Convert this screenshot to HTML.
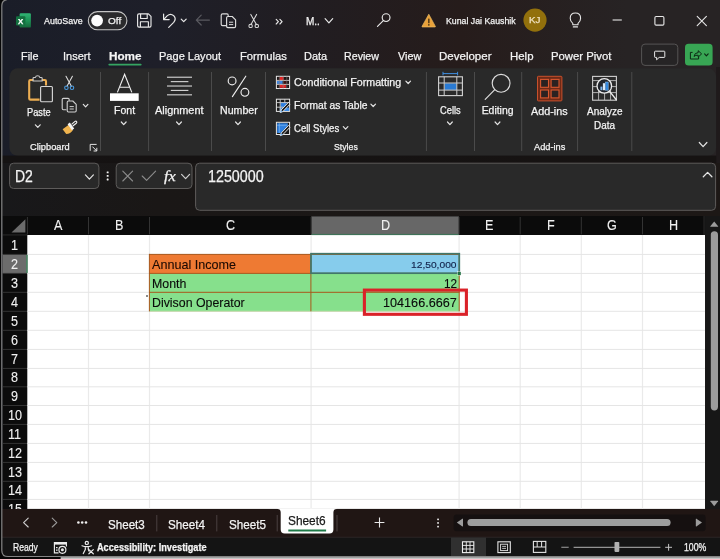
<!DOCTYPE html>
<html lang="en">
<head>
<meta charset="utf-8">
<title>Excel</title>
<style>
*{box-sizing:border-box;margin:0;padding:0}
html,body{width:720px;height:559px;overflow:hidden;background:#1c1a1c}
body{font-family:"Liberation Sans",sans-serif;color:#fff;position:relative;font-size:12px}
#win{position:absolute;left:0;top:0;width:720px;height:559px;overflow:hidden;will-change:transform;
 background:linear-gradient(90deg,#1a1d28 0%,#1e1f29 22%,#211d21 43%,#261c1b 64%,#272324 87%,#272324 100%)}
.a{position:absolute;white-space:nowrap}
.t{position:absolute;white-space:nowrap;line-height:1;color:#f4f4f4;transform-origin:0 0;-webkit-text-stroke:0.25px currentColor}
svg{position:absolute;overflow:visible;left:0;top:0}
</style>
</head>
<body>
<div id="win">
<!-- TITLE BAR -->
<svg width="720" height="559" viewBox="0 0 720 559">
<defs><linearGradient id="xg" x1="0" y1="0" x2="0" y2="1"><stop offset="0" stop-color="#2fb574"/><stop offset="0.5" stop-color="#1e9457"/><stop offset="1" stop-color="#16693c"/></linearGradient></defs>
<rect x="19.6" y="13.3" width="11.3" height="14.3" rx="1.2" fill="url(#xg)"/>
<rect x="16" y="16.2" width="9.4" height="9.2" rx="1" fill="#13703f"/>
<rect x="88.3" y="11.6" width="38.6" height="18.2" rx="9.1" fill="#2a2a2c" stroke="#c4c4c4" stroke-width="1.1"/>
<circle cx="97.1" cy="20.6" r="5.9" fill="#fdfdfd"/>
<g fill="none" stroke="#e8e8e8" stroke-width="1.15" stroke-linejoin="round">
<path d="M137.6 15.2 q0 -1.4 1.4 -1.4 h9.4 l2.6 2.6 v9.4 q0 1.4 -1.4 1.4 h-10.6 q-1.4 0 -1.4 -1.4 z"/>
<path d="M140.6 13.9 v4.6 h6.6 v-4.6"/>
<path d="M140.4 27.1 v-5.4 h8 v5.4"/>
</g>
<path d="M163.6 14 v5.6 h5.6 M163.9 19.3 l3.2 -3.4 q3.4 -3 6.6 -0.2 q3 3.2 0 6.6 l-5 5" fill="none" stroke="#e8e8e8" stroke-width="1.2" stroke-linecap="round" stroke-linejoin="round"/>
<path d="M181.20 19.10 L183.70 21.70 L186.20 19.10" fill="none" stroke="#e8e8e8" stroke-width="1.20" stroke-linecap="round" stroke-linejoin="round"/>
<path d="M209.4 20.1 h-13 M201.2 15.2 l-4.9 4.9 l4.9 4.9" fill="none" stroke="#5a5a60" stroke-width="1.2" stroke-linecap="round" stroke-linejoin="round"/>
<g fill="none" stroke="#dcdcdc" stroke-width="1.15" stroke-linejoin="round">
<path d="M226 25.6 h-3.4 q-1.4 0 -1.4 -1.4 v-9 q0 -1.4 1.4 -1.4 h4.4 q1.2 0 1.2 1.4 v1.2"/>
<path d="M226.6 17.8 q0 -1.3 1.3 -1.3 h4.3 l3.4 3.4 v6.4 q0 1.3 -1.3 1.3 h-6.4 q-1.3 0 -1.3 -1.3 z"/>
<path d="M229 22.2 h4.2 M229 24.6 h4.2" stroke-width="1"/>
</g>
<g fill="none" stroke="#dcdcdc" stroke-width="1.05" stroke-linecap="round">
<path d="M250.8 14.4 l5.6 10.2 M256.6 14.4 l-5.6 10.2"/>
<circle cx="250.6" cy="25.9" r="1.7"/><circle cx="256.8" cy="25.9" r="1.7"/>
</g>
<path d="M276.2 19.4 l2.2 2.3 l-2.2 2.3 M279.9 19.4 l2.2 2.3 l-2.2 2.3" fill="none" stroke="#e8e8e8" stroke-width="1.15" stroke-linecap="round" stroke-linejoin="round"/>
<path d="M325.10 18.60 L328.90 22.80 L332.70 18.60" fill="none" stroke="#e8e8e8" stroke-width="1.20" stroke-linecap="round" stroke-linejoin="round"/>
<circle cx="386.1" cy="17.6" r="3.9" fill="none" stroke="#e8e8e8" stroke-width="1.15"/>
<path d="M383.3 20.6 l-5.8 5.8" fill="none" stroke="#e8e8e8" stroke-width="1.2" stroke-linecap="round"/>
<path d="M428.8 14.2 l6.6 12.2 q0.2 0.6 -0.5 0.6 h-12.4 q-0.7 0 -0.5 -0.6 z" fill="#e9a23b" stroke="#f3c46a" stroke-width="0.6" stroke-linejoin="round"/>
<rect x="428.2" y="18.4" width="1.3" height="4.8" rx="0.5" fill="#3a2a12"/>
<circle cx="428.85" cy="24.9" r="0.8" fill="#3a2a12"/>
<circle cx="535" cy="20.1" r="11.6" fill="#92700c"/>
<g fill="none" stroke="#e8e8e8" stroke-width="1.1" stroke-linecap="round" stroke-linejoin="round">
<path d="M572.8 23.4 q-2.6 -2.2 -2.6 -5.2 q0 -5.2 5.2 -5.2 q5.2 0 5.2 5.2 q0 3 -2.6 5.2 v1.4 h-5.2 z"/>
<path d="M573.3 26.9 h4.2"/>
</g>
<path d="M612.6 20 h9.2" stroke="#e8e8e8" stroke-width="1.1" fill="none"/>
<rect x="654.9" y="16.5" width="9" height="8.6" rx="1.2" fill="none" stroke="#e8e8e8" stroke-width="1.1"/>
<path d="M697.2 16.4 l9.2 9.2 M706.4 16.4 l-9.2 9.2" stroke="#e8e8e8" stroke-width="1.1" fill="none" stroke-linecap="round"/>
<rect x="108.4" y="63.8" width="33.2" height="1.7" rx="0.8" fill="#35a562"/>
<rect x="641.6" y="44.1" width="36.2" height="21.3" rx="3.4" fill="#262425" stroke="#565454" stroke-width="1"/>
<path d="M655.2 51.2 h9 q0.6 0 0.6 0.6 v5 q0 0.6 -0.6 0.6 h-5 l-2.6 2.4 v-2.4 h-1.4 q-0.6 0 -0.6 -0.6 v-5 q0 -0.6 0.6 -0.6 z" fill="none" stroke="#e8e8e8" stroke-width="1" stroke-linejoin="round"/>
<rect x="685" y="43.8" width="27.6" height="21.8" rx="3.6" fill="#38a654"/>
<path d="M692.6 52.4 h-2.2 v6.6 h8.2 v-2.2 M694 56.4 q0.4 -3.6 4.2 -3.8 v-1.9 l3.4 3.2 l-3.4 3.2 v-1.9 q-2.6 -0.2 -4.2 1.2 z" fill="none" stroke="#0c2814" stroke-width="1" stroke-linejoin="round"/>
<path d="M704.60 53.80 L706.40 55.80 L708.20 53.80" fill="none" stroke="#0c2814" stroke-width="1.10" stroke-linecap="round" stroke-linejoin="round"/>
</svg>
<span class="t" style="left:18.10px;top:18px;font-size:7.60px;transform:scaleX(1.0258);color:#fff;font-weight:bold;">X</span>
<span class="t" style="left:44.40px;top:17px;font-size:9.30px;transform:scaleX(0.9572);">AutoSave</span>
<span class="t" style="left:107.80px;top:17px;font-size:9.30px;transform:scaleX(1.0769);">Off</span>
<span class="t" style="left:305.50px;top:17px;font-size:10.40px;transform:scaleX(0.9622);">M..</span>
<span class="t" style="left:445.80px;top:17px;font-size:9.30px;transform:scaleX(0.9426);">Kunal Jai Kaushik</span>
<span class="t" style="left:529.20px;top:16px;font-size:8.60px;transform:scaleX(1.1359);color:#f0e2c0;">KJ</span>
<span class="t" style="left:21.30px;top:51px;font-size:11.80px;transform:scaleX(0.9206);">File</span>
<span class="t" style="left:62.50px;top:51px;font-size:11.80px;transform:scaleX(0.9318);">Insert</span>
<span class="t" style="left:158.50px;top:51px;font-size:11.80px;transform:scaleX(0.9356);">Page Layout</span>
<span class="t" style="left:239.50px;top:51px;font-size:11.80px;transform:scaleX(0.9516);">Formulas</span>
<span class="t" style="left:303.80px;top:51px;font-size:11.80px;transform:scaleX(0.9305);">Data</span>
<span class="t" style="left:343.80px;top:51px;font-size:11.80px;transform:scaleX(0.9037);">Review</span>
<span class="t" style="left:397.50px;top:51px;font-size:11.80px;transform:scaleX(0.9176);">View</span>
<span class="t" style="left:438.80px;top:51px;font-size:11.80px;transform:scaleX(0.9761);">Developer</span>
<span class="t" style="left:509.50px;top:51px;font-size:11.80px;transform:scaleX(0.9682);">Help</span>
<span class="t" style="left:551.30px;top:51px;font-size:11.80px;transform:scaleX(0.9610);">Power Pivot</span>
<span class="t" style="left:108.80px;top:51px;font-size:11.80px;transform:scaleX(0.9914);font-weight:bold;">Home</span>
<!-- RIBBON -->
<svg width="720" height="559" viewBox="0 0 720 559">
<rect x="9.4" y="68.2" width="706.8" height="87.8" rx="8.5" fill="#292929"/>
<rect x="100.0" y="72" width="1" height="79" fill="#4b4b4b"/>
<rect x="148.1" y="72" width="1" height="79" fill="#4b4b4b"/>
<rect x="211.0" y="72" width="1" height="79" fill="#4b4b4b"/>
<rect x="265.0" y="72" width="1" height="79" fill="#4b4b4b"/>
<rect x="425.9" y="72" width="1" height="79" fill="#4b4b4b"/>
<rect x="474.0" y="72" width="1" height="79" fill="#4b4b4b"/>
<rect x="521.2" y="72" width="1" height="79" fill="#4b4b4b"/>
<rect x="577.1" y="72" width="1" height="79" fill="#4b4b4b"/>
<rect x="631.3" y="72" width="1" height="79" fill="#4b4b4b"/>
<path d="M33.4 80 h-3 q-1.2 0 -1.2 1.2 v17.2 q0 1.2 1.2 1.2 h9.2 M41.8 80 h3 q1.2 0 1.2 1.2 v4.4" fill="none" stroke="#edae52" stroke-width="2.1" stroke-linejoin="round"/>
<path d="M33 81 v-2.6 q0 -0.9 0.9 -0.9 h1.5 q0.3 -1.8 2.2 -1.8 q1.9 0 2.2 1.8 h1.5 q0.9 0 0.9 0.9 v2.6 z" fill="none" stroke="#c9c9c9" stroke-width="1.1" stroke-linejoin="round"/>
<rect x="40.6" y="86.5" width="11.8" height="15.2" rx="1" fill="#2b2b2b" stroke="#d6d6d6" stroke-width="1.15"/>
<path d="M35.40 124.80 L37.80 127.40 L40.20 124.80" fill="none" stroke="#e4e4e4" stroke-width="1.20" stroke-linecap="round" stroke-linejoin="round"/>
<path d="M66 76.2 l5.4 10 M72.4 76.2 l-5.4 10" fill="none" stroke="#e0e0e0" stroke-width="1.05" stroke-linecap="round"/>
<circle cx="66.4" cy="87.8" r="1.75" fill="none" stroke="#4a9be0" stroke-width="1.1"/><circle cx="72" cy="87.8" r="1.75" fill="none" stroke="#4a9be0" stroke-width="1.1"/>
<g fill="none" stroke="#d2d2d2" stroke-width="1.1" stroke-linejoin="round">
<path d="M66.4 109.8 h-3 q-1.2 0 -1.2 -1.2 v-9 q0 -1.2 1.2 -1.2 h4.6 q1.2 0 1.2 1.2 v1.2"/>
<path d="M67.2 102.2 q0 -1.2 1.2 -1.2 h4.4 l3.4 3.4 v6.4 q0 1.2 -1.2 1.2 h-6.6 q-1.2 0 -1.2 -1.2 z"/>
<path d="M69.6 106.6 h4.2 M69.6 109 h4.2" stroke-width="1"/>
</g>
<path d="M83.30 104.40 L85.60 106.80 L87.90 104.40" fill="none" stroke="#e4e4e4" stroke-width="1.20" stroke-linecap="round" stroke-linejoin="round"/>
<path d="M62.6 129.2 l6.2 -4.4 l4 5.4 q-2.2 3.6 -6.6 3.8 z" fill="#f0b44e"/>
<path d="M67.6 124.2 l2.2 -1.6 l4.4 6 l-2.2 1.6 z" fill="#f4f4f4"/>
<path d="M71.6 124.4 l3.4 -3 q1 -0.6 1.6 0.2 q0.6 0.9 -0.3 1.6 l-3.5 2.8" fill="none" stroke="#f0f0f0" stroke-width="1.1" stroke-linejoin="round"/>
<path d="M96.6 144.4 h-6.4 v6.4 M92.4 146.6 l4.4 4.4 M93.6 151 h3.2 v-3.2" fill="none" stroke="#e4e4e4" stroke-width="1" />
<path d="M117.4 92.4 l7.2 -18 l7.2 18 M120 87.2 h9.2" fill="none" stroke="#f0f0f0" stroke-width="1.15" stroke-linejoin="miter"/>
<rect x="110" y="93.3" width="28.7" height="7.6" fill="#ffffff"/>
<path d="M121.30 122.00 L123.70 124.60 L126.10 122.00" fill="none" stroke="#e4e4e4" stroke-width="1.20" stroke-linecap="round" stroke-linejoin="round"/>
<rect x="167" y="76.65" width="25" height="1.15" fill="#cfcfcf"/>
<rect x="170.8" y="81.05" width="17.6" height="1.15" fill="#cfcfcf"/>
<rect x="167" y="85.45" width="25" height="1.15" fill="#cfcfcf"/>
<rect x="170.8" y="89.85" width="17.6" height="1.15" fill="#cfcfcf"/>
<rect x="167" y="94.25" width="25" height="1.15" fill="#cfcfcf"/>
<path d="M176.60 122.00 L179.00 124.60 L181.40 122.00" fill="none" stroke="#e4e4e4" stroke-width="1.20" stroke-linecap="round" stroke-linejoin="round"/>
<g fill="none" stroke="#ececec" stroke-width="1.15">
<circle cx="232.1" cy="80.9" r="3.9"/><circle cx="244.9" cy="92.3" r="3.9"/><path d="M245.8 76.2 l-13.4 20.4" stroke-linecap="round"/>
</g>
<path d="M235.60 122.00 L238.00 124.60 L240.40 122.00" fill="none" stroke="#e4e4e4" stroke-width="1.20" stroke-linecap="round" stroke-linejoin="round"/>
<rect x="276.4" y="76.3" width="13.2" height="12.2" fill="#1d1717" stroke="#e6e6e6" stroke-width="1"/>
<rect x="279.7" y="77.0" width="3.9" height="3" fill="#e32626"/>
<rect x="279.7" y="84.8" width="6.2" height="3" fill="#e32626"/>
<rect x="277" y="80.9" width="5.6" height="3" fill="#3d86e0"/>
<rect x="283.4" y="80.9" width="3.2" height="3" fill="#3a1414"/>
<path d="M276.4 80.4 h13.2 M276.4 84.4 h13.2" fill="none" stroke="#d8d0d0" stroke-width="0.9"/>
<path d="M279.3 76.3 v12.2 M283.2 76.3 v12.2 M286.8 76.3 v12.2" fill="none" stroke="#8c7c7c" stroke-width="0.6"/>
<rect x="276.4" y="99.2" width="13.2" height="12.2" fill="#1a1a1a" stroke="#e6e6e6" stroke-width="1"/>
<rect x="280.6" y="102.6" width="6" height="4.6" fill="#2f80e0"/>
<rect x="279.8" y="107.6" width="9.4" height="3.4" fill="#3f8ee6"/>
<path d="M276.4 102.6 h13.2 M276.4 107.2 h6.6 M280.2 99.2 v12.2 M284.8 99.2 v3.4" fill="none" stroke="#d4d4d4" stroke-width="0.9"/>
<path d="M288.40 102.40 l1.7 1.6 l-7.3 7.6 l-2.6 1 l0.9 -2.6 z" fill="#202020" stroke="#f2f2f2" stroke-width="0.9" stroke-linejoin="round"/><path d="M282.80 111.60 l-2.6 1 l0.9 -2.6 z" fill="#7ab8f2"/>
<rect x="276.4" y="122.3" width="13.2" height="12.2" fill="#1a1a1a" stroke="#e6e6e6" stroke-width="1"/>
<path d="M277.2 123.3 h10.6 v2.4 l-7 7.4 h-3.6 z" fill="#2f80e0"/>
<path d="M279.4 123.3 v9.6 M277.2 125.3 h10" fill="none" stroke="#7ab4ee" stroke-width="0.7"/>
<path d="M288.40 125.50 l1.7 1.6 l-7.3 7.6 l-2.6 1 l0.9 -2.6 z" fill="#202020" stroke="#f2f2f2" stroke-width="0.9" stroke-linejoin="round"/><path d="M282.80 134.70 l-2.6 1 l0.9 -2.6 z" fill="#7ab8f2"/>
<path d="M405.90 81.10 L408.20 83.50 L410.50 81.10" fill="none" stroke="#e4e4e4" stroke-width="1.20" stroke-linecap="round" stroke-linejoin="round"/>
<path d="M370.90 104.10 L373.20 106.50 L375.50 104.10" fill="none" stroke="#e4e4e4" stroke-width="1.20" stroke-linecap="round" stroke-linejoin="round"/>
<path d="M343.30 126.70 L345.60 129.10 L347.90 126.70" fill="none" stroke="#e4e4e4" stroke-width="1.20" stroke-linecap="round" stroke-linejoin="round"/>
<path d="M443 71.8 v3.6 M457.6 71.8 v3.6 M443 73.6 h14.6" fill="none" stroke="#3f8fe0" stroke-width="1"/>
<rect x="438.6" y="76.8" width="23.8" height="18.8" fill="#2a2a2a" stroke="#d4d4d4" stroke-width="1.1"/>
<rect x="444.6" y="83.3" width="12" height="6.6" fill="#2a7bd4"/>
<path d="M444.2 76.8 v18.8 M456.8 76.8 v18.8 M438.6 83 h23.8 M438.6 90.1 h23.8" fill="none" stroke="#cfcfcf" stroke-width="1"/>
<path d="M447.50 122.00 L449.90 124.60 L452.30 122.00" fill="none" stroke="#e4e4e4" stroke-width="1.20" stroke-linecap="round" stroke-linejoin="round"/>
<circle cx="501.1" cy="83.3" r="8.9" fill="none" stroke="#dcdcdc" stroke-width="1.15"/>
<path d="M494.8 89.7 l-9.6 9.6" fill="none" stroke="#dcdcdc" stroke-width="1.2" stroke-linecap="round"/>
<path d="M495.10 122.00 L497.50 124.60 L499.90 122.00" fill="none" stroke="#e4e4e4" stroke-width="1.20" stroke-linecap="round" stroke-linejoin="round"/>
<rect x="537.5" y="76.3" width="24.4" height="24.6" rx="0.8" fill="#6e2a17" stroke="#c9502c" stroke-width="1"/>
<rect x="540.6" y="79.4" width="7.9" height="7.9" fill="#2b2221" stroke="#d9582f" stroke-width="1.1"/>
<rect x="551.1" y="79.4" width="7.9" height="7.9" fill="#2b2221" stroke="#d9582f" stroke-width="1.1"/>
<rect x="540.6" y="90.0" width="7.9" height="7.9" fill="#2b2221" stroke="#d9582f" stroke-width="1.1"/>
<rect x="551.1" y="90.0" width="7.9" height="7.9" fill="#2b2221" stroke="#d9582f" stroke-width="1.1"/>
<rect x="592.6" y="76.4" width="23.8" height="23.8" fill="#2a2a2a" stroke="#cfcfcf" stroke-width="1.1"/>
<path d="M592.6 80.6 h23.8 M592.6 86.6 h23.8 M592.6 92.6 h23.8 M598.6 80.6 v19.6 M604.6 80.6 v19.6 M610.6 80.6 v19.6" fill="none" stroke="#bdbdbd" stroke-width="0.9"/>
<circle cx="604.3" cy="85.9" r="7.3" fill="#20242b" stroke="#ececec" stroke-width="1.3"/>
<rect x="600.4" y="86.6" width="2" height="3.6" fill="#7fb6ee"/><rect x="602.9" y="83.2" width="2.2" height="7" fill="#d8e8f8"/><rect x="605.6" y="82" width="2.6" height="8.2" fill="#2f86e0" stroke="#9ccaf4" stroke-width="0.5"/>
<path d="M609.8 91.6 l6.4 8" fill="none" stroke="#ececec" stroke-width="1.5" stroke-linecap="round"/>
<path d="M699.30 142.50 L703.10 146.70 L706.90 142.50" fill="none" stroke="#e4e4e4" stroke-width="1.20" stroke-linecap="round" stroke-linejoin="round"/>
</svg>
<span class="t" style="left:26.60px;top:108px;font-size:10.40px;transform:scaleX(0.8912);">Paste</span>
<span class="t" style="left:29.60px;top:142px;font-size:9.80px;transform:scaleX(0.9465);">Clipboard</span>
<span class="t" style="left:114.10px;top:106px;font-size:10.40px;transform:scaleX(1.0139);">Font</span>
<span class="t" style="left:155.40px;top:106px;font-size:10.40px;transform:scaleX(1.0508);">Alignment</span>
<span class="t" style="left:219.60px;top:106px;font-size:10.40px;transform:scaleX(1.0218);">Number</span>
<span class="t" style="left:294.00px;top:78px;font-size:10.40px;transform:scaleX(1.0255);">Conditional Formatting</span>
<span class="t" style="left:294.00px;top:101px;font-size:10.40px;transform:scaleX(0.9896);">Format as Table</span>
<span class="t" style="left:294.00px;top:124px;font-size:10.40px;transform:scaleX(0.9200);">Cell Styles</span>
<span class="t" style="left:333.80px;top:142px;font-size:9.80px;transform:scaleX(0.8919);">Styles</span>
<span class="t" style="left:440.00px;top:106px;font-size:10.40px;transform:scaleX(0.8954);">Cells</span>
<span class="t" style="left:481.70px;top:106px;font-size:10.40px;">Editing</span>
<span class="t" style="left:531.20px;top:107px;font-size:10.40px;transform:scaleX(1.0378);">Add-ins</span>
<span class="t" style="left:533.70px;top:142px;font-size:9.80px;transform:scaleX(0.9419);">Add-ins</span>
<span class="t" style="left:586.70px;top:107px;font-size:10.40px;transform:scaleX(0.9621);">Analyze</span>
<span class="t" style="left:593.90px;top:121px;font-size:10.40px;transform:scaleX(0.9556);">Data</span>
<!-- FORMULA BAR -->
<svg width="720" height="559" viewBox="0 0 720 559">
<defs><linearGradient id="fbg" x1="0" y1="0" x2="1" y2="0"><stop offset="0" stop-color="#18181a"/><stop offset="0.22" stop-color="#1a1716"/><stop offset="1" stop-color="#1d1816"/></linearGradient></defs>
<rect x="0" y="156" width="720" height="60.4" fill="url(#fbg)"/>
<rect x="0" y="155.5" width="720" height="7.4" fill="#141112" opacity="0.75"/>
<rect x="716.2" y="67" width="3.8" height="96" fill="#1f1a1b"/>
<rect x="9.6" y="163.2" width="89.3" height="25.3" rx="4" fill="#292929" stroke="#5e5c5b" stroke-width="1"/>
<rect x="116.2" y="163.2" width="75.8" height="25.3" rx="4" fill="#292929" stroke="#5e5c5b" stroke-width="1"/>
<rect x="195.6" y="163.2" width="520.0" height="47.1" rx="4" fill="#292929" stroke="#5e5c5b" stroke-width="1"/>
<path d="M85.40 174.90 L89.40 179.10 L93.40 174.90" fill="none" stroke="#e4e4e4" stroke-width="1.20" stroke-linecap="round" stroke-linejoin="round"/>
<rect x="106.7" y="171.4" width="1.9" height="1.9" rx="0.4" fill="#f4f4f4"/>
<rect x="106.7" y="174.9" width="1.9" height="1.9" rx="0.4" fill="#f4f4f4"/>
<rect x="106.7" y="178.5" width="1.9" height="1.9" rx="0.4" fill="#f4f4f4"/>
<path d="M122.8 171.2 l9.8 9.8 M132.6 171.2 l-9.8 9.8" fill="none" stroke="#8c8c8c" stroke-width="1.1" stroke-linecap="round"/>
<path d="M142.2 176 l4.4 4.4 l9 -9.2" fill="none" stroke="#8c8c8c" stroke-width="1.1" stroke-linecap="round" stroke-linejoin="round"/>
<path d="M181.60 174.40 L185.60 178.60 L189.60 174.40" fill="none" stroke="#d0d0d0" stroke-width="1.20" stroke-linecap="round" stroke-linejoin="round"/>
<path d="M703.30 176.80 L707.60 172.40 L711.90 176.80" fill="none" stroke="#e4e4e4" stroke-width="1.30" stroke-linecap="round" stroke-linejoin="round"/>
</svg>
<span class="t" style="left:14.50px;top:169px;font-size:16.80px;transform:scaleX(0.8337);">D2</span>
<span class="t" style="left:164.40px;top:169px;font-size:14.50px;transform:scaleX(1.1271);font-style:italic;font-family:'Liberation Serif',serif;">fx</span>
<span class="t" style="left:207.60px;top:169px;font-size:16.00px;transform:scaleX(0.8942);">1250000</span>
<!-- GRID -->
<svg id="gridsvg" width="720" height="559" viewBox="0 0 720 559">
<rect x="2.4" y="216" width="701" height="292.9" fill="#0b0b0b"/>
<rect x="27.3" y="235.0" width="677.8" height="273.9" fill="#ffffff"/>
<rect x="311.3" y="216.4" width="147.6" height="18.3" fill="#676767"/>
<rect x="311.3" y="233.9" width="147.6" height="1.2" fill="#3f7258"/>
<rect x="2.6" y="254.10" width="24.6" height="19.20" fill="#6c6c6c"/>
<rect x="26.3" y="254.10" width="1.3" height="19.20" fill="#418a60"/>
<polygon points="11.5,232.6 25.4,232.6 25.4,219.2" fill="#6b6b6b"/>
<rect x="2.6" y="234.5" width="24.6" height="0.9" fill="#2e2e2e"/>
<rect x="26.9" y="217" width="1" height="17.4" fill="#333333"/>
<rect x="88.0" y="217" width="1" height="17.4" fill="#333333"/>
<rect x="87.90" y="235.0" width="1.2" height="273.9" fill="#eaeaea"/>
<rect x="149.0" y="217" width="1" height="17.4" fill="#333333"/>
<rect x="148.90" y="235.0" width="1.2" height="273.9" fill="#eaeaea"/>
<rect x="310.6" y="217" width="1" height="17.4" fill="#333333"/>
<rect x="310.50" y="235.0" width="1.2" height="273.9" fill="#eaeaea"/>
<rect x="458.6" y="217" width="1" height="17.4" fill="#333333"/>
<rect x="458.50" y="235.0" width="1.2" height="273.9" fill="#eaeaea"/>
<rect x="519.7" y="217" width="1" height="17.4" fill="#333333"/>
<rect x="519.60" y="235.0" width="1.2" height="273.9" fill="#eaeaea"/>
<rect x="580.8" y="217" width="1" height="17.4" fill="#333333"/>
<rect x="580.70" y="235.0" width="1.2" height="273.9" fill="#eaeaea"/>
<rect x="642.0" y="217" width="1" height="17.4" fill="#333333"/>
<rect x="641.90" y="235.0" width="1.2" height="273.9" fill="#eaeaea"/>
<rect x="27.4" y="253.90" width="677.7" height="1" fill="#e5e5e5"/>
<rect x="3" y="253.90" width="24" height="1" fill="#333333"/>
<rect x="27.4" y="272.90" width="677.7" height="1" fill="#e5e5e5"/>
<rect x="3" y="272.90" width="24" height="1" fill="#333333"/>
<rect x="27.4" y="291.80" width="677.7" height="1" fill="#e5e5e5"/>
<rect x="3" y="291.80" width="24" height="1" fill="#333333"/>
<rect x="27.4" y="310.80" width="677.7" height="1" fill="#e5e5e5"/>
<rect x="3" y="310.80" width="24" height="1" fill="#333333"/>
<rect x="27.4" y="329.80" width="677.7" height="1" fill="#e5e5e5"/>
<rect x="3" y="329.80" width="24" height="1" fill="#333333"/>
<rect x="27.4" y="348.90" width="677.7" height="1" fill="#e5e5e5"/>
<rect x="3" y="348.90" width="24" height="1" fill="#333333"/>
<rect x="27.4" y="367.90" width="677.7" height="1" fill="#e5e5e5"/>
<rect x="3" y="367.90" width="24" height="1" fill="#333333"/>
<rect x="27.4" y="386.30" width="677.7" height="1" fill="#e5e5e5"/>
<rect x="3" y="386.30" width="24" height="1" fill="#333333"/>
<rect x="27.4" y="405.00" width="677.7" height="1" fill="#e5e5e5"/>
<rect x="3" y="405.00" width="24" height="1" fill="#333333"/>
<rect x="27.4" y="423.90" width="677.7" height="1" fill="#e5e5e5"/>
<rect x="3" y="423.90" width="24" height="1" fill="#333333"/>
<rect x="27.4" y="442.90" width="677.7" height="1" fill="#e5e5e5"/>
<rect x="3" y="442.90" width="24" height="1" fill="#333333"/>
<rect x="27.4" y="461.90" width="677.7" height="1" fill="#e5e5e5"/>
<rect x="3" y="461.90" width="24" height="1" fill="#333333"/>
<rect x="27.4" y="480.80" width="677.7" height="1" fill="#e5e5e5"/>
<rect x="3" y="480.80" width="24" height="1" fill="#333333"/>
<rect x="27.4" y="498.90" width="677.7" height="1" fill="#e5e5e5"/>
<rect x="3" y="498.90" width="24" height="1" fill="#333333"/>
<rect x="149.4" y="254.40" width="161.5" height="19.00" fill="#ee7a33"/>
<rect x="310.9" y="254.40" width="148.4" height="19.00" fill="#86ccec"/>
<rect x="149.4" y="273.40" width="309.9" height="37.90" fill="#86e08c"/>
<rect x="149" y="253.90" width="310.6" height="1" fill="#a9581c"/>
<rect x="149" y="272.90" width="310.6" height="1" fill="#a9581c"/>
<rect x="149" y="291.80" width="310.6" height="1" fill="#a9581c"/>
<rect x="149" y="310.80" width="310.6" height="1" fill="#c9d9b0"/>
<rect x="148.9" y="253.90" width="1" height="57.40" fill="#a9581c"/>
<rect x="310.4" y="253.90" width="1" height="57.40" fill="#a9581c"/>
<rect x="458.7" y="253.90" width="1" height="57.40" fill="#a9581c"/>
<rect x="311" y="253.70" width="148.3" height="19.50" fill="none" stroke="#41776a" stroke-width="1.7"/>
<rect x="457.6" y="271.80" width="3.4" height="3.4" fill="#1f6f3f" stroke="#fff" stroke-width="0.4"/>
<rect x="146.3" y="295.3" width="1.4" height="1.4" fill="#111"/>
<rect x="364.4" y="290.1" width="102" height="24.2" fill="none" stroke="#da2229" stroke-width="3.1"/>
</svg>
<span class="t" style="left:53.75px;top:218px;font-size:14.00px;transform:scaleX(0.9000);color:#f0f0f0;-webkit-text-stroke:0.1px currentColor;">A</span>
<span class="t" style="left:114.80px;top:218px;font-size:14.00px;transform:scaleX(0.9000);color:#f0f0f0;-webkit-text-stroke:0.1px currentColor;">B</span>
<span class="t" style="left:225.75px;top:218px;font-size:14.00px;transform:scaleX(0.9000);color:#f0f0f0;-webkit-text-stroke:0.1px currentColor;">C</span>
<span class="t" style="left:380.55px;top:218px;font-size:14.00px;transform:scaleX(0.9000);color:#f0f0f0;-webkit-text-stroke:0.1px currentColor;">D</span>
<span class="t" style="left:485.45px;top:218px;font-size:14.00px;transform:scaleX(0.9000);color:#f0f0f0;-webkit-text-stroke:0.1px currentColor;">E</span>
<span class="t" style="left:546.90px;top:218px;font-size:14.00px;transform:scaleX(0.9000);color:#f0f0f0;-webkit-text-stroke:0.1px currentColor;">F</span>
<span class="t" style="left:607.00px;top:218px;font-size:14.00px;transform:scaleX(0.9000);color:#f0f0f0;-webkit-text-stroke:0.1px currentColor;">G</span>
<span class="t" style="left:669.25px;top:218px;font-size:14.00px;transform:scaleX(0.9000);color:#f0f0f0;-webkit-text-stroke:0.1px currentColor;">H</span>
<span class="t" style="left:11.40px;top:238px;font-size:14.00px;transform:scaleX(0.9000);color:#f0f0f0;-webkit-text-stroke:0.1px currentColor;">1</span>
<span class="t" style="left:11.40px;top:257px;font-size:14.00px;transform:scaleX(0.9000);color:#f0f0f0;-webkit-text-stroke:0.1px currentColor;">2</span>
<span class="t" style="left:11.40px;top:276px;font-size:14.00px;transform:scaleX(0.9000);color:#f0f0f0;-webkit-text-stroke:0.1px currentColor;">3</span>
<span class="t" style="left:11.40px;top:295px;font-size:14.00px;transform:scaleX(0.9000);color:#f0f0f0;-webkit-text-stroke:0.1px currentColor;">4</span>
<span class="t" style="left:11.40px;top:314px;font-size:14.00px;transform:scaleX(0.9000);color:#f0f0f0;-webkit-text-stroke:0.1px currentColor;">5</span>
<span class="t" style="left:11.40px;top:333px;font-size:14.00px;transform:scaleX(0.9000);color:#f0f0f0;-webkit-text-stroke:0.1px currentColor;">6</span>
<span class="t" style="left:11.40px;top:352px;font-size:14.00px;transform:scaleX(0.9000);color:#f0f0f0;-webkit-text-stroke:0.1px currentColor;">7</span>
<span class="t" style="left:11.40px;top:370px;font-size:14.00px;transform:scaleX(0.9000);color:#f0f0f0;-webkit-text-stroke:0.1px currentColor;">8</span>
<span class="t" style="left:11.40px;top:389px;font-size:14.00px;transform:scaleX(0.9000);color:#f0f0f0;-webkit-text-stroke:0.1px currentColor;">9</span>
<span class="t" style="left:7.89px;top:408px;font-size:14.00px;transform:scaleX(0.9000);color:#f0f0f0;-webkit-text-stroke:0.1px currentColor;">10</span>
<span class="t" style="left:8.36px;top:427px;font-size:14.00px;transform:scaleX(0.9000);color:#f0f0f0;-webkit-text-stroke:0.1px currentColor;">11</span>
<span class="t" style="left:7.89px;top:446px;font-size:14.00px;transform:scaleX(0.9000);color:#f0f0f0;-webkit-text-stroke:0.1px currentColor;">12</span>
<span class="t" style="left:7.89px;top:465px;font-size:14.00px;transform:scaleX(0.9000);color:#f0f0f0;-webkit-text-stroke:0.1px currentColor;">13</span>
<span class="t" style="left:7.89px;top:483px;font-size:14.00px;transform:scaleX(0.9000);color:#f0f0f0;-webkit-text-stroke:0.1px currentColor;">14</span>
<div class="a" style="left:2px;top:500px;width:26px;height:8.9px;overflow:hidden"><div class="a" style="left:0;top:-500px"><span class="t" style="left:5.89px;top:502px;font-size:14.00px;transform:scaleX(0.9000);color:#f0f0f0;-webkit-text-stroke:0.1px currentColor;">15</span></div></div>
<span class="t" style="left:152.20px;top:258px;font-size:13.20px;transform:scaleX(0.9539);color:#1c0a02;-webkit-text-stroke:0.12px currentColor;">Annual Income</span>
<span class="t" style="left:152.20px;top:277px;font-size:13.20px;transform:scaleX(0.9378);color:#0a0a0a;-webkit-text-stroke:0.12px currentColor;">Month</span>
<span class="t" style="left:152.20px;top:296px;font-size:13.20px;transform:scaleX(0.9370);color:#0a0a0a;-webkit-text-stroke:0.12px currentColor;">Divison Operator</span>
<span class="t" style="left:411.00px;top:260px;font-size:9.70px;transform:scaleX(1.0566);color:#13244c;-webkit-text-stroke:0.15px currentColor;">12,50,000</span>
<span class="t" style="left:444.00px;top:278px;font-size:12.30px;transform:scaleX(0.9578);color:#0a0a0a;-webkit-text-stroke:0.12px currentColor;">12</span>
<span class="t" style="left:383.20px;top:296px;font-size:13.30px;transform:scaleX(0.9503);color:#0a0a0a;-webkit-text-stroke:0.12px currentColor;">104166.6667</span>
<!-- SHEET TABS / STATUS / SCROLLBARS -->
<svg width="720" height="559" viewBox="0 0 720 559">
<rect x="705.1" y="216" width="14.9" height="293.2" fill="#171717"/>
<rect x="703.4" y="216" width="1.7" height="19" fill="#1c1c1c"/>
<path d="M714.2 221.6 l3.9 4.7 q0.3 0.5 -0.3 0.5 h-7.2 q-0.6 0 -0.3 -0.5 z" fill="#9c9c9c"/>
<rect x="710.8" y="231.2" width="7.2" height="179.2" rx="3.6" fill="#9c9c9c"/>
<path d="M714.2 506.2 l3.9 -4.9 q0.3 -0.5 -0.3 -0.5 h-7.2 q-0.6 0 -0.3 0.5 z" fill="#9c9c9c"/>
<rect x="0" y="509" width="720" height="28.4" fill="#201614"/>
<rect x="0" y="537" width="720" height="22" fill="#141414"/>
<rect x="0" y="536.8" width="720" height="0.8" fill="#332a2a"/>
<path d="M28.2 518.2 l-4.6 4.4 l4.6 4.4" fill="none" stroke="#cfcfcf" stroke-width="1.1" stroke-linecap="round" stroke-linejoin="round"/>
<path d="M52.2 518.2 l4.6 4.4 l-4.6 4.4" fill="none" stroke="#9a9a9a" stroke-width="1.1" stroke-linecap="round" stroke-linejoin="round"/>
<circle cx="78.4" cy="522.5" r="1.3" fill="#f0f0f0"/>
<circle cx="82.2" cy="522.5" r="1.3" fill="#f0f0f0"/>
<circle cx="86.0" cy="522.5" r="1.3" fill="#f0f0f0"/>
<rect x="156.3" y="515" width="1" height="16.4" fill="#4a4040"/>
<rect x="216.3" y="515" width="1" height="16.4" fill="#4a4040"/>
<rect x="276.7" y="515" width="1" height="16.4" fill="#4a4040"/>
<rect x="336.5" y="515" width="1" height="16.4" fill="#4a4040"/>
<path d="M277.4 508.6 h59.4 v0.5 q-3.4 0 -3.4 3.4 v17 q0 4 -4 4 h-44.7 q-4 0 -4 -4 v-17 q0 -3.4 -3.3 -3.4 z" fill="#ffffff"/>
<rect x="288.3" y="529.5" width="37.8" height="2" fill="#1f7a48"/>
<path d="M374.6 522.5 h9.8 M379.5 517.6 v9.8" fill="none" stroke="#e8e8e8" stroke-width="1.1"/>
<rect x="437.2" y="518.5" width="1.7" height="1.7" rx="0.4" fill="#f0f0f0"/>
<rect x="437.2" y="522.1" width="1.7" height="1.7" rx="0.4" fill="#f0f0f0"/>
<rect x="437.2" y="525.8" width="1.7" height="1.7" rx="0.4" fill="#f0f0f0"/>
<rect x="453.6" y="514.6" width="252" height="16.6" rx="3" fill="#151010"/>
<path d="M456.8 522.6 l5.6 -3.9 q0.6 -0.3 0.6 0.4 v7 q0 0.7 -0.6 0.4 z" fill="#9c9c9c"/>
<rect x="467.4" y="519" width="203.2" height="7.1" rx="3.5" fill="#9e9e9e"/>
<path d="M702 522.6 l-5.6 -3.9 q-0.6 -0.3 -0.6 0.4 v7 q0 0.7 0.6 0.4 z" fill="#9c9c9c"/>
<g fill="none" stroke="#ececec" stroke-width="1.15">
<path d="M58.6 552.8 h-4.2 v-10.2 h12 v4"/>
<path d="M54.4 543.6 h12" stroke-width="2"/>
<path d="M56 547.6 h1.6 M56 550.2 h1.6" stroke-width="1.2"/>
<circle cx="62.4" cy="549.8" r="3.5" fill="#141414"/><circle cx="62.4" cy="549.8" r="1.5" fill="#ececec" stroke="none"/>
</g>
<g fill="none" stroke="#ececec" stroke-width="1.2" stroke-linecap="round" stroke-linejoin="round">
<circle cx="86.8" cy="542.9" r="1.6"/>
<path d="M82 545.8 q4.8 1.8 9.6 0 M85.3 546.8 v2.8 l-2 4 M88.3 546.8 v2.8 l0.8 1.6"/>
<path d="M88.9 549.6 l4.4 4.2 M93.3 549.6 l-4.4 4.2"/>
</g>
<rect x="451" y="537.6" width="35" height="21" fill="#303030"/>
<rect x="462.5" y="541.8" width="11.3" height="10.8" fill="#1c1c1c" stroke="#f0f0f0" stroke-width="1.1"/>
<path d="M466.3 541.8 v10.8 M470 541.8 v10.8 M462.5 545.4 h11.3 M462.5 549 h11.3" fill="none" stroke="#f0f0f0" stroke-width="0.9"/>
<rect x="497.9" y="541.8" width="12.4" height="10.8" fill="none" stroke="#e4e4e4" stroke-width="1.1"/>
<rect x="500.6" y="544.2" width="7" height="6.4" fill="none" stroke="#e4e4e4" stroke-width="0.9"/>
<path d="M502.2 546.4 h3.8 M502.2 548.4 h3.8" fill="none" stroke="#e4e4e4" stroke-width="0.8"/>
<rect x="533.4" y="541.4" width="12.4" height="11" fill="none" stroke="#e4e4e4" stroke-width="1.1"/>
<path d="M537.2 541.4 v5.6 h4.4 v-5.6 M533.4 547 h3.8 M541.6 547 h4.2" fill="none" stroke="#e4e4e4" stroke-width="1"/>
<rect x="561.3" y="546.7" width="7.4" height="1.2" fill="#8a8a8a"/>
<rect x="573.6" y="546.8" width="86.8" height="1" fill="#b4b4b4"/>
<rect x="614.5" y="542" width="4.8" height="9.9" rx="0.8" fill="#b0b0b0"/>
<path d="M665.2 547.3 h6.8 M668.6 543.9 v6.8" fill="none" stroke="#c4c4c4" stroke-width="1"/>
</svg>
<span class="t" style="left:107.90px;top:518px;font-size:13.30px;transform:scaleX(0.8731);">Sheet3</span>
<span class="t" style="left:168.40px;top:518px;font-size:13.30px;transform:scaleX(0.8779);">Sheet4</span>
<span class="t" style="left:228.70px;top:518px;font-size:13.30px;transform:scaleX(0.8779);">Sheet5</span>
<span class="t" style="left:288.40px;top:514px;font-size:13.30px;transform:scaleX(0.8921);color:#1a1a1a;">Sheet6</span>
<span class="t" style="left:12.60px;top:543px;font-size:10.00px;transform:scaleX(0.8578);">Ready</span>
<span class="t" style="left:97.40px;top:543px;font-size:10.00px;transform:scaleX(0.9172);font-weight:bold;">Accessibility: Investigate</span>
<span class="t" style="left:684.20px;top:543px;font-size:10.00px;transform:scaleX(0.8757);">100%</span>
<!-- WINDOW FRAME -->
<svg width="720" height="559" viewBox="0 0 720 559">
<path d="M0 0 H6.8 Q1.8 0.4 1.8 6 V550.4 Q1.8 556.5 8.2 556.5 H720 V559 H0 Z" fill="#060606"/>
<rect x="60.6" y="557.2" width="659.4" height="1.8" fill="#c6c6c6"/>
<path d="M6.8 -0.4 Q1.8 0.4 1.8 6 V550.4 Q1.8 556.5 8.2 556.5 H720" fill="none" stroke="#858585" stroke-width="1.2"/>
</svg>
</div>
</body>
</html>
